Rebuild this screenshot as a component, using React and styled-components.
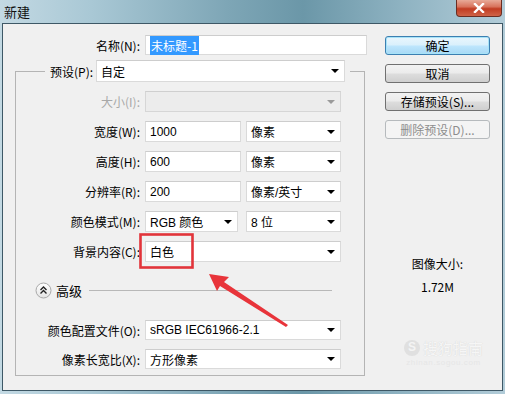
import React from 'react';
import styled, { createGlobalStyle, css } from 'styled-components';

const GlobalStyle = createGlobalStyle`
  html, body {
    margin: 0;
    padding: 0;
  }
  body {
    width: 505px;
    height: 394px;
    overflow: hidden;
    font-family: "Liberation Sans", "Noto Sans CJK SC", sans-serif;
    font-size: 12px;
    color: #000;
  }
`;

const Window = styled.div`
  position: relative;
  width: 505px;
  height: 394px;
  box-sizing: border-box;
  display: flex;
  flex-direction: column;
  padding: 0 2px 3px 2px;
  background: linear-gradient(90deg, #c3d9e3 0%, #a9c8d5 18%, #7ea6b6 45%, #6b97a8 60%, #8fb3c2 80%, #b2ccd8 100%);
`;

const TitleBar = styled.div`
  height: 23px;
  display: flex;
  justify-content: space-between;
  align-items: flex-start;
`;

const Title = styled.div`
  font-family: "Noto Sans CJK SC", sans-serif;
  font-size: 13px;
  line-height: 23px;
  padding-left: 2px;
  color: #111;
`;

const CloseButton = styled.div`
  width: 46px;
  height: 17px;
  margin-right: 1px;
  box-sizing: border-box;
  border: 1px solid #6a2d22;
  border-top: none;
  border-radius: 0 0 4px 4px;
  background: linear-gradient(#e8aa98 0%, #d8735c 42%, #c13c22 55%, #cf6448 100%);
  display: flex;
  align-items: center;
  justify-content: center;
`;

const Client = styled.div`
  flex: 1;
  display: flex;
  background: #f0f0f0;
  border: 1px solid #3e5866;
`;

const LeftPane = styled.div`
  width: 367px;
  padding-top: 11px;
`;

const NameRow = styled.div`
  display: grid;
  grid-template-columns: 137px 222px;
  column-gap: 5px;
  align-items: center;
`;

const Label = styled.div`
  font-family: "Noto Sans CJK SC", sans-serif;
  font-size: 12px;
  text-align: right;
  white-space: nowrap;
  color: ${(p) => (p.disabled ? '#a8a8a8' : '#000')};
`;

const fieldBase = css`
  box-sizing: border-box;
  height: ${(p) => p.h || 21}px;
  width: ${(p) => (p.w ? `${p.w}px` : '100%')};
  background: ${(p) => (p.disabled ? '#ececec' : '#fff')};
  border: 1px solid ${(p) => (p.disabled ? '#d6d6d6' : '#dadada')};
  border-top-color: ${(p) => (p.disabled ? '#cfcfcf' : '#cdcdcd')};
  display: flex;
  align-items: center;
  padding-left: 4px;
  font-family: "Liberation Sans", "Noto Sans CJK SC", sans-serif;
  font-size: 12px;
  white-space: nowrap;
`;

const TextBox = styled.div`
  ${fieldBase}
`;

const Selected = styled.span`
  background: #3399ff;
  color: #fff;
  padding: 1px 1px;
  font-family: "Noto Sans CJK SC", sans-serif;
`;

const SelectBox = styled.div`
  ${fieldBase}
  justify-content: space-between;
  padding-right: 5px;
`;

const Arrow = styled.span`
  width: 0;
  height: 0;
  border-left: 4px solid transparent;
  border-right: 4px solid transparent;
  border-top: 4px solid ${(p) => (p.disabled ? '#9a9a9a' : '#000')};
`;

const GroupBox = styled.fieldset`
  margin: 5px 0 0 12px;
  padding: 0;
  width: 350px;
  box-sizing: border-box;
  border: 1px solid #b4b4b4;
  min-width: 0;
`;

const Legend = styled.legend`
  margin-left: 29px;
  padding: 0 5px;
  display: flex;
  align-items: center;
  gap: 3px;
`;

const GroupBody = styled.div`
  display: flex;
  flex-direction: column;
  gap: 9px;
  padding: 9px 0 6px 0;
`;

const Row = styled.div`
  display: grid;
  grid-template-columns: 124px 196px;
  column-gap: 5px;
  align-items: center;
`;

const Pair = styled.div`
  display: flex;
  justify-content: space-between;
`;

const AdvancedRow = styled.div`
  display: flex;
  align-items: center;
  height: 16px;
  margin: 11px 32px 13px 0;
  padding-left: 19px;
  gap: 4px;
`;

const AdvancedText = styled.span`
  font-family: "Noto Sans CJK SC", sans-serif;
  font-size: 13px;
`;

const Rule = styled.div`
  flex: 1;
  height: 1px;
  margin-left: 3px;
  background: #b8b8b8;
`;

const RightPane = styled.div`
  padding: 12px 0 0 15px;
  display: flex;
  flex-direction: column;
  width: 105px;
`;

const Buttons = styled.div`
  display: flex;
  flex-direction: column;
  gap: 9px;
`;

const Button = styled.div`
  height: 19px;
  box-sizing: border-box;
  border-radius: 3px;
  display: flex;
  align-items: center;
  justify-content: center;
  font-family: "Noto Sans CJK SC", "Liberation Sans", sans-serif;
  font-size: 12px;
  ${(p) =>
    p.disabled
      ? css`
          border: 1px solid #b6babd;
          background: #f4f4f4;
          color: #8d8d8d;
        `
      : p.primary
      ? css`
          border: 1px solid #3c7fb1;
          box-shadow: inset 0 0 0 1px #a7e3f8;
          background: linear-gradient(#eaf6fd 0%, #d9f0fc 48%, #bee6fd 52%, #a7d9f5 100%);
        `
      : css`
          border: 1px solid #707070;
          background: linear-gradient(#f2f2f2 0%, #ebebeb 48%, #dddddd 52%, #cfcfcf 100%);
        `}
`;

const Info = styled.div`
  margin-top: 117px;
  display: flex;
  flex-direction: column;
  align-items: center;
  gap: 7px;
  font-family: "Noto Sans CJK SC", "Liberation Sans", sans-serif;
  font-size: 12px;
  line-height: 16px;
`;

const Watermark = styled.div`
  margin-top: 44px;
  margin-left: 12px;
  display: flex;
  flex-direction: column;
  align-items: center;
  gap: 2px;
  color: #f6f6f6;
  text-shadow: 0 0 1px #cfcfcf;
`;

const WatermarkBrand = styled.div`
  display: flex;
  align-items: center;
  gap: 3px;
  font-family: "Noto Sans CJK SC", sans-serif;
  font-size: 15px;
  line-height: 17px;
`;

const WatermarkDot = styled.span`
  width: 16px;
  height: 16px;
  border-radius: 50%;
  background: #e0e0e0;
  color: #f4f4f4;
  font-family: "Liberation Sans", sans-serif;
  font-weight: bold;
  font-size: 12px;
  display: flex;
  align-items: center;
  justify-content: center;
  text-shadow: none;
`;

const WatermarkUrl = styled.div`
  font-family: "Liberation Sans", sans-serif;
  font-size: 8px;
  letter-spacing: 0.6px;
  color: #e6e6e6;
  text-shadow: none;
`;

const Overlay = styled.svg`
  position: absolute;
  left: 0;
  top: 0;
  pointer-events: none;
`;

function Select({ value, w, h, disabled }) {
  return (
    <SelectBox w={w} h={h} disabled={disabled}>
      <span>{value}</span>
      <Arrow disabled={disabled} />
    </SelectBox>
  );
}

function CollapseIcon() {
  return (
    <svg width="17" height="17" viewBox="0 0 17 17">
      <defs>
        <linearGradient id="cg" x1="0" y1="0" x2="0" y2="1">
          <stop offset="0" stopColor="#ffffff" />
          <stop offset="1" stopColor="#e4e4e4" />
        </linearGradient>
      </defs>
      <circle cx="8.5" cy="8.5" r="7.5" fill="url(#cg)" stroke="#a9a9a9" />
      <path d="M5.5 8 L8.5 5 L11.5 8 M5.5 11.5 L8.5 8.5 L11.5 11.5" fill="none" stroke="#222" strokeWidth="1.4" />
    </svg>
  );
}

const rows = [
  { label: '宽度(W):', value: '1000', unit: '像素' },
  { label: '高度(H):', value: '600', unit: '像素' },
  { label: '分辨率(R):', value: '200', unit: '像素/英寸' },
];

export default function App() {
  return (
    <Window>
      <GlobalStyle />
      <TitleBar>
        <Title>新建</Title>
        <CloseButton>
          <svg width="12" height="10" viewBox="0 0 12 10">
            <path d="M2 1 L10 9 M10 1 L2 9" stroke="#fff" strokeWidth="2.4" strokeLinecap="square" />
          </svg>
        </CloseButton>
      </TitleBar>
      <Client>
        <LeftPane>
          <NameRow>
            <Label>名称(N):</Label>
            <TextBox h={20}>
              <Selected>未标题-1</Selected>
            </TextBox>
          </NameRow>
          <GroupBox>
            <Legend>
              <Label>预设(P):</Label>
              <Select value="自定" w={249} h={22} />
            </Legend>
            <GroupBody>
              <Row>
                <Label disabled>大小(I):</Label>
                <Select value="" disabled />
              </Row>
              {rows.map((r) => (
                <Row key={r.label}>
                  <Label>{r.label}</Label>
                  <Pair>
                    <TextBox w={96}>{r.value}</TextBox>
                    <Select value={r.unit} w={95} />
                  </Pair>
                </Row>
              ))}
              <Row>
                <Label>颜色模式(M):</Label>
                <Pair>
                  <Select value="RGB 颜色" w={93} />
                  <Select value="8 位" w={95} />
                </Pair>
              </Row>
              <Row>
                <Label>背景内容(C):</Label>
                <Select value="白色" />
              </Row>
              <AdvancedRow>
                <CollapseIcon />
                <AdvancedText>高级</AdvancedText>
                <Rule />
              </AdvancedRow>
              <Row>
                <Label>颜色配置文件(O):</Label>
                <Select value="sRGB IEC61966-2.1" h={20} />
              </Row>
              <Row>
                <Label>像素长宽比(X):</Label>
                <Select value="方形像素" h={20} />
              </Row>
            </GroupBody>
          </GroupBox>
        </LeftPane>
        <RightPane>
          <Buttons>
            <Button primary>确定</Button>
            <Button>取消</Button>
            <Button>存储预设(S)...</Button>
            <Button disabled>删除预设(D)...</Button>
          </Buttons>
          <Info>
            <span>图像大小:</span>
            <span>1.72M</span>
          </Info>
          <Watermark>
            <WatermarkBrand>
              <WatermarkDot>S</WatermarkDot>
              搜狗指南
            </WatermarkBrand>
            <WatermarkUrl>zhinan.sogou.com</WatermarkUrl>
          </Watermark>
        </RightPane>
      </Client>
      <Overlay width="505" height="394" viewBox="0 0 505 394">
        <rect x="140.5" y="234.5" width="52" height="33" fill="none" stroke="#e2343a" strokeWidth="2.6" />
        <polygon
          points="209,274 229,277 224,282 288,325 286,327 220,286 217,291"
          fill="#e8343a"
        />
      </Overlay>
    </Window>
  );
}
